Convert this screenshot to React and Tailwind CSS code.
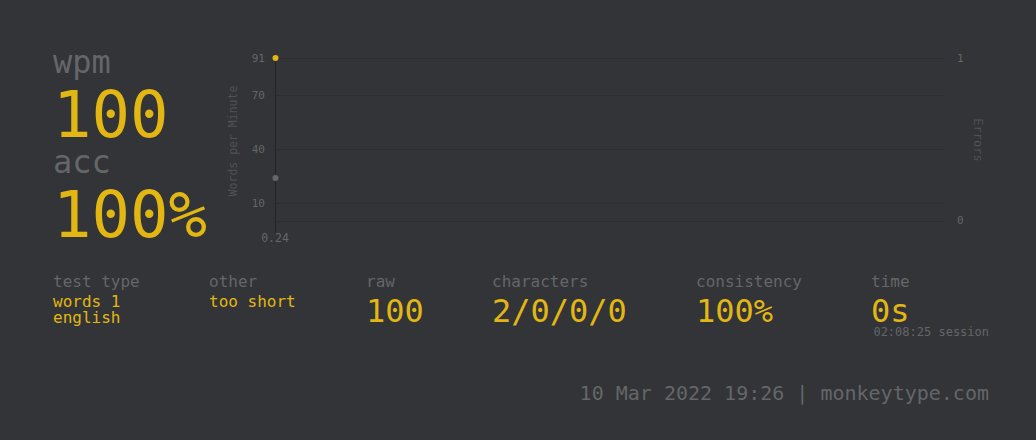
import React from "react";

const mono = { fontFamily: '"DejaVu Sans Mono", "Liberation Mono", monospace' };

function Chart() {
  const grid = [18, 55, 109, 163, 181];
  const ticks = [
    ["91", 18],
    ["70", 55],
    ["40", 109],
    ["10", 163],
  ];
  return (
    <svg width="770" height="210" viewBox="0 0 770 210" className="block shrink-0" style={mono}>
      {grid.map((y) => (
        <line key={y} x1="50" x2="718" y1={y + 0.5} y2={y + 0.5} stroke="#2b2d30" strokeWidth="1" />
      ))}
      <line x1="50.5" x2="50.5" y1="18" y2="193" stroke="#222325" strokeWidth="1" />
      {ticks.map(([t, y]) => (
        <text key={t} x="40" y={y + 4} textAnchor="end" fontSize="11" fill="#646669">
          {t}
        </text>
      ))}
      <text x="50" y="202" textAnchor="middle" fontSize="11.5" fill="#646669">0.24</text>
      <text x="732" y="22" fontSize="11" fill="#646669">1</text>
      <text x="732" y="184" fontSize="11" fill="#646669">0</text>
      <text
        transform="translate(12 101) rotate(-90)"
        textAnchor="middle"
        fontSize="11.5"
        fill="#4f5154"
      >
        Words per Minute
      </text>
      <text
        transform="translate(749 100) rotate(90)"
        textAnchor="middle"
        fontSize="12"
        fill="#4f5154"
      >
        Errors
      </text>
      <circle cx="50.5" cy="138" r="3" fill="#646669" />
      <circle cx="50.5" cy="18" r="3" fill="#e2b714" />
    </svg>
  );
}

function Stat({ label, children, w }) {
  return (
    <div className={`flex flex-col ${w}`}>
      <div className="text-[16px] leading-[24px] text-[#646669]">{label}</div>
      {children}
    </div>
  );
}

export default function App() {
  return (
    <div className="w-[1036px] h-[440px] bg-[#323437] pl-[53px] pr-[47px] pt-[40px] overflow-hidden" style={mono}>
      <div className="flex">
        <div className="flex flex-col w-[172px] shrink-0">
          <div className="text-[32px] leading-[44px] text-[#646669]">wpm</div>
          <div className="text-[64px] leading-[62px] text-[#e2b714]">100</div>
          <div className="text-[32px] leading-[32px] text-[#646669]">acc</div>
          <div className="text-[64px] leading-[74px] text-[#e2b714]">100%</div>
        </div>
        <Chart />
      </div>
      <div className="flex mt-[17.5px]">
        <Stat label="test type" w="w-[156px]">
          <div className="text-[16px] leading-[16px] text-[#e2b714]">words 1</div>
          <div className="text-[16px] leading-[16px] text-[#e2b714]">english</div>
        </Stat>
        <Stat label="other" w="w-[157px]">
          <div className="text-[16px] leading-[16px] text-[#e2b714]">too short</div>
        </Stat>
        <Stat label="raw" w="w-[126px]">
          <div className="text-[32px] leading-[35px] text-[#e2b714]">100</div>
        </Stat>
        <Stat label="characters" w="w-[204px]">
          <div className="text-[32px] leading-[35px] text-[#e2b714]">2/0/0/0</div>
        </Stat>
        <Stat label="consistency" w="w-[175px]">
          <div className="text-[32px] leading-[35px] text-[#e2b714]">100%</div>
        </Stat>
        <div className="flex flex-col flex-1">
          <div className="text-[16px] leading-[24px] text-[#646669]">time</div>
          <div className="text-[32px] leading-[35px] text-[#e2b714]">0s</div>
          <div className="text-[12px] leading-[12px] text-[#646669] text-right mt-[-2.5px]">02:08:25 session</div>
        </div>
      </div>
      <div className="mt-[41px] text-right text-[20px] leading-[28px] text-[#646669]">
        10 Mar 2022 19:26 | monkeytype.com
      </div>
    </div>
  );
}
